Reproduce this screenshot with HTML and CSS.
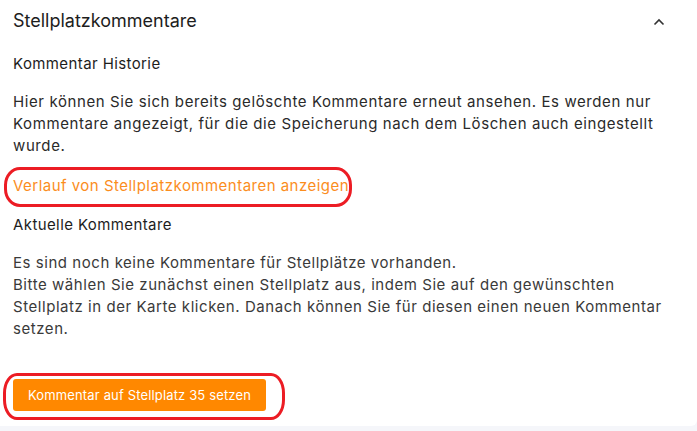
FILE: index.html
```html
<!DOCTYPE html>
<html lang="de">
<head>
<meta charset="utf-8">
<link rel="stylesheet" href="styles.css">
</head>
<body>
<section class="card">
  <header class="card-head">
    <h2 class="title">Stellplatzkommentare</h2>
    <svg class="chevron" width="12" height="8" viewBox="0 0 12 8"><path d="M1.5 6.5 L6 2 L10.5 6.5" fill="none" stroke="#333" stroke-width="1.6"/></svg>
  </header>
  <h3 class="subtitle sub-first">Kommentar Historie</h3>
  <p class="text">Hier können Sie sich bereits gelöschte Kommentare erneut ansehen. Es werden nur Kommentare angezeigt, für die die Speicherung nach dem Löschen auch eingestellt wurde.</p>
  <div class="link-wrap">
    <a class="link" href="#">Verlauf von Stellplatzkommentaren anzeigen</a>
    <span class="mark mark-link"></span>
  </div>
  <h3 class="subtitle">Aktuelle Kommentare</h3>
  <p class="text text-muted">Es sind noch keine Kommentare für Stellplätze vorhanden.<br>Bitte wählen Sie zunächst einen Stellplatz aus, indem Sie auf den gewünschten Stellplatz in der Karte klicken. Danach können Sie für diesen einen neuen Kommentar setzen.</p>
  <div class="btn-wrap">
    <button class="btn">Kommentar auf Stellplatz 35 setzen</button>
    <span class="mark mark-btn"></span>
  </div>
</section>
</body>
</html>
```
FILE: styles.css
```css
html, body {
  margin: 0;
  padding: 0;
}
body {
  background: #f5f6fa;
  font-family: Inter, "Noto Sans", sans-serif;
  color: #222;
  width: 697px;
  height: 431px;
  overflow: hidden;
}
.card {
  background: #fff;
  width: 697px;
  box-sizing: border-box;
  padding: 10px 13px 15px 13px;
  border-radius: 0 0 6px 0;
}
.card-head {
  display: flex;
  align-items: center;
  justify-content: space-between;
  height: 22px;
}
.title {
  margin: 0;
  font-size: 18px;
  font-weight: 400;
  line-height: 22px;
  color: #1d1d1d;
}
.chevron {
  margin-right: 19px;
  margin-top: 2px;
}
.subtitle {
  margin: 17px 0 0 0;
  font-size: 15px;
  font-weight: 400;
  line-height: 22px;
  letter-spacing: 0.4px;
  color: #1d1d1d;
}
.sub-first {
  margin-top: 21px;
}
.text {
  margin: 16px 0 0 0;
  font-size: 15px;
  line-height: 22px;
  letter-spacing: 0.6px;
  color: #2a2a2a;
}
.text-muted {
  color: #3a3a3a;
  letter-spacing: 0.55px;
}
.link-wrap {
  position: relative;
  margin-top: 17px;
  line-height: 22px;
}
.link {
  font-size: 15px;
  letter-spacing: 0.48px;
  color: #fb8d1d;
  text-decoration: none;
}
.mark {
  position: absolute;
  border: 3px solid #ec1c24;
  pointer-events: none;
}
.mark-link {
  left: -9px;
  top: -7px;
  width: 342px;
  height: 34px;
  border-radius: 16px / 18px;
}
.btn-wrap {
  position: relative;
  margin-top: 39px;
  height: 32px;
}
.btn {
  display: block;
  height: 32px;
  width: 253px;
  border: none;
  border-radius: 3px;
  background: #ff8800;
  color: #fff;
  font-family: Inter, "Noto Sans", sans-serif;
  font-size: 13px;
  letter-spacing: 0.15px;
  padding: 0;
}
.mark-btn {
  left: -10px;
  top: -6px;
  width: 276px;
  height: 41px;
  border-radius: 14px / 20px;
}
```
